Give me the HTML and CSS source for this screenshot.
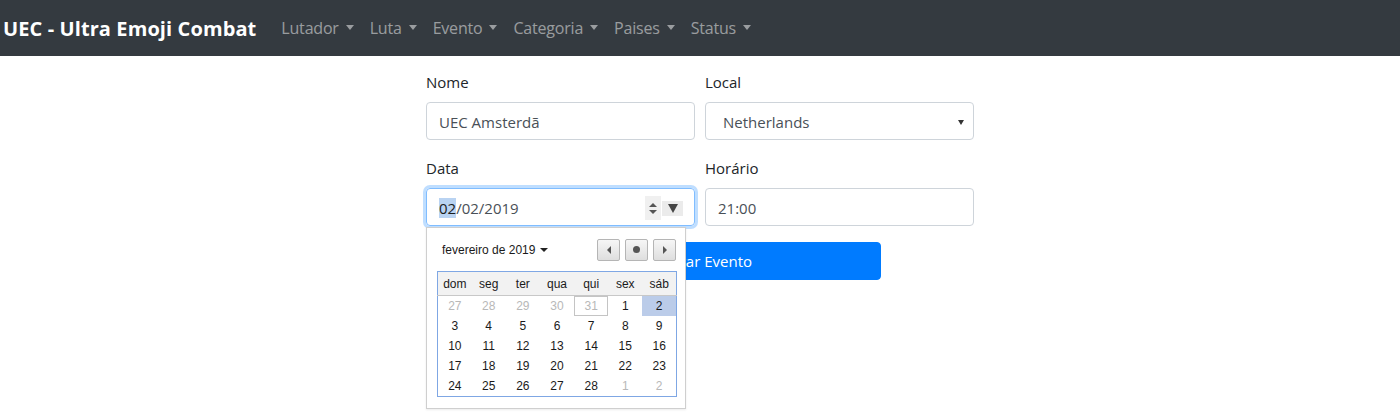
FILE: index.html
```html
<!DOCTYPE html>
<html lang="pt-BR">
<head>
<meta charset="utf-8">
<title>UEC</title>
<link rel="stylesheet" href="styles.css">
</head>
<body>
<nav class="navbar">
  <span class="brand">UEC - Ultra Emoji Combat</span>
  <ul class="nav">
    <li class="nav-item">Lutador<span class="caret"></span></li>
    <li class="nav-item">Luta<span class="caret"></span></li>
    <li class="nav-item">Evento<span class="caret"></span></li>
    <li class="nav-item">Categoria<span class="caret"></span></li>
    <li class="nav-item">Paises<span class="caret"></span></li>
    <li class="nav-item">Status<span class="caret"></span></li>
  </ul>
</nav>
<main class="container">
  <form class="form">
    <div class="form-row">
      <div class="form-group">
        <label class="label">Nome</label>
        <div class="input">UEC Amsterdã</div>
      </div>
      <div class="form-group">
        <label class="label">Local</label>
        <div class="input select">Netherlands<span class="select-arrow"></span></div>
      </div>
    </div>
    <div class="form-row">
      <div class="form-group date-group">
        <label class="label">Data</label>
        <div class="input focused">
          <span class="sel">02</span>/02/2019
          <span class="spin"><span class="up"></span><span class="down"></span></span>
          <span class="drop"><span class="drop-tri"></span></span>
        </div>
        <div class="picker">
          <div class="picker-head">
            <span class="month">fevereiro de 2019<span class="mcaret"></span></span>
            <span class="pbtns">
              <span class="pbtn"><span class="tri-left"></span></span>
              <span class="pbtn"><span class="dot"></span></span>
              <span class="pbtn"><span class="tri-right"></span></span>
            </span>
          </div>
          <table class="cal">
            <thead>
              <tr><th>dom</th><th>seg</th><th>ter</th><th>qua</th><th>qui</th><th>sex</th><th>sáb</th></tr>
            </thead>
            <tbody>
              <tr><td class="other">27</td><td class="other">28</td><td class="other">29</td><td class="other">30</td><td class="other today"><span>31</span></td><td>1</td><td class="selected">2</td></tr>
              <tr><td>3</td><td>4</td><td>5</td><td>6</td><td>7</td><td>8</td><td>9</td></tr>
              <tr><td>10</td><td>11</td><td>12</td><td>13</td><td>14</td><td>15</td><td>16</td></tr>
              <tr><td>17</td><td>18</td><td>19</td><td>20</td><td>21</td><td>22</td><td>23</td></tr>
              <tr><td>24</td><td>25</td><td>26</td><td>27</td><td>28</td><td class="other">1</td><td class="other">2</td></tr>
            </tbody>
          </table>
        </div>
      </div>
      <div class="form-group">
        <label class="label">Horário</label>
        <div class="input">21:00</div>
      </div>
    </div>
    <div class="actions">
      <button type="button" class="btn">Cadastrar Evento</button>
    </div>
  </form>
</main>
</body>
</html>
```
FILE: styles.css
```css
* { box-sizing: border-box; }
html, body { margin: 0; padding: 0; background: #fff; min-height: 420px; }
body {
  font-family: "Open Sans", "Noto Sans", "Liberation Sans", sans-serif;
  font-size: 16px;
  color: #212529;
}
.navbar {
  height: 56px;
  background: #343a40;
  display: flex;
  align-items: center;
  padding-left: 3px;
}
.brand {
  color: #fff;
  font-weight: 700;
  font-size: 20px;
  letter-spacing: 0.1px;
  margin-right: 25px;
  white-space: nowrap;
}
.nav {
  list-style: none;
  margin: 0;
  padding: 0;
  display: flex;
}
.nav-item {
  color: rgba(255,255,255,0.5);
  font-size: 16px;
  letter-spacing: -0.2px;
  margin-right: 16px;
  display: flex;
  align-items: center;
}
.caret {
  display: inline-block;
  margin-left: 7px;
  border-top: 5px solid rgba(255,255,255,0.5);
  border-left: 4px solid transparent;
  border-right: 4px solid transparent;
  margin-top: -2px;
}
.container {
  width: 548px;
  margin: 14px auto 0;
}
.form-row {
  display: grid;
  grid-template-columns: 1fr 1fr;
  column-gap: 10px;
}
.form-group { margin-bottom: 16px; position: relative; }
.label {
  display: block;
  line-height: 24px;
  margin-bottom: 8px;
  font-size: 15px;
}
.input {
  height: 38px;
  border: 1px solid #ced4da;
  border-radius: 4px;
  padding: 1px 12px 0;
  display: flex;
  align-items: center;
  color: #495057;
  font-size: 15px;
  position: relative;
}
.select { padding-left: 17px; }
.select-arrow {
  position: absolute;
  right: 9px;
  top: 17px;
  border-top: 5px solid #333;
  border-left: 3px solid transparent;
  border-right: 3px solid transparent;
}
.focused {
  border-color: #80bdff;
  box-shadow: 0 0 0 3px rgba(0,123,255,0.25);
}
.sel { background: #b9d3f2; color: #1b1b1b; }
.spin {
  position: absolute;
  left: 218px;
  top: 7px;
  width: 16px;
  height: 24px;
  background: #f0f0f0;
  display: flex;
  flex-direction: column;
  align-items: center;
  justify-content: center;
  gap: 3px;
}
.up {
  border-bottom: 4px solid #555;
  border-left: 4px solid transparent;
  border-right: 4px solid transparent;
}
.down {
  border-top: 4px solid #555;
  border-left: 4px solid transparent;
  border-right: 4px solid transparent;
}
.drop {
  position: absolute;
  left: 235px;
  top: 12px;
  width: 21px;
  height: 15px;
  background: #ebebeb;
  display: flex;
  align-items: center;
  justify-content: center;
}
.drop-tri {
  border-top: 9px solid #444;
  border-left: 5px solid transparent;
  border-right: 5px solid transparent;
}
.picker {
  position: absolute;
  left: 0;
  top: 71px;
  width: 260px;
  height: 182px;
  background: #fff;
  border: 1px solid #cfcfcf;
  box-shadow: 0 1px 2px rgba(0,0,0,0.08);
  z-index: 5;
  padding: 10px 9px 0 10px;
  font-family: "Liberation Sans", Arial, sans-serif;
  font-size: 12px;
  color: #1a1a1a;
}
.picker-head {
  display: flex;
  justify-content: space-between;
  align-items: center;
  height: 23px;
  margin-bottom: 10px;
}
.month {
  padding-left: 5px;
  display: flex;
  align-items: center;
}
.mcaret {
  display: inline-block;
  margin-left: 5px;
  border-top: 4px solid #222;
  border-left: 4px solid transparent;
  border-right: 4px solid transparent;
}
.pbtns { display: flex; gap: 5px; }
.pbtn {
  width: 23px;
  height: 22px;
  border: 1px solid #b5b5b5;
  border-radius: 2px;
  background: linear-gradient(#f6f6f6, #dedede);
  display: flex;
  align-items: center;
  justify-content: center;
}
.tri-left {
  border-right: 4px solid #555;
  border-top: 4px solid transparent;
  border-bottom: 4px solid transparent;
}
.tri-right {
  border-left: 4px solid #555;
  border-top: 4px solid transparent;
  border-bottom: 4px solid transparent;
}
.dot {
  width: 7px; height: 7px; border-radius: 50%; background: #555;
}
.cal {
  border-collapse: collapse;
  border: 1px solid #7fa7e4;
  width: 240px;
  table-layout: fixed;
}
.cal th {
  font-weight: 400;
  background: #f2f2f2;
  height: 24px;
  border-bottom: 1px solid #c8c8c8;
  text-align: center;
  padding: 0;
}
.cal td {
  height: 20px;
  text-align: center;
  padding: 0;
  font-size: 12px;
}
.cal td.other { color: #b8b8b8; }
.cal td.selected { background: #bbcce9; }
.cal td.today span {
  display: flex;
  align-items: center;
  justify-content: center;
  height: 20px;
  border: 1px solid #c4c4c4;
}
.actions { padding-left: 77px; }
.btn {
  width: 378px;
  height: 38px;
  background: #007bff;
  border: 1px solid #007bff;
  border-radius: 4px;
  color: #fff;
  font-family: "Open Sans", "Noto Sans", sans-serif;
  font-size: 15px;
  padding: 0;
}
```
